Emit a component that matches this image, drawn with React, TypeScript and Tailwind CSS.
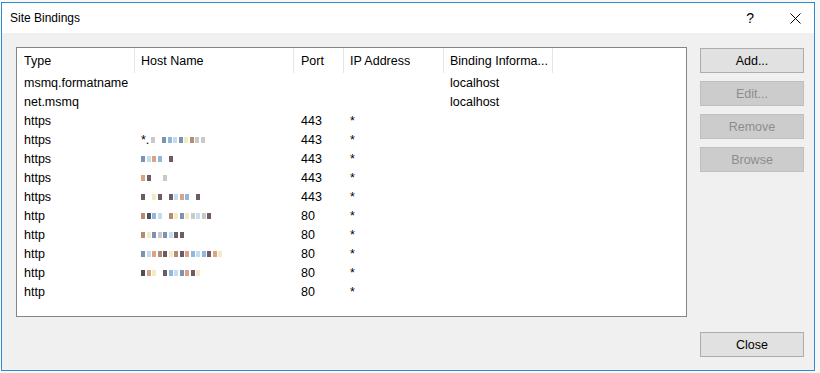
import React from "react";

type Binding = {
  type: string;
  host?: string[]; // pixelated host name cells
  hostPrefix?: string;
  port?: string;
  ip?: string;
  info?: string;
};

const G = "#c9c9c9";
const BG = "#7f90b3";
const BL = "#8fb8e0";
const LB = "#c4dcf0";
const LY = "#f1ecc6";
const BR = "#b58c72";
const MV = "#6f5b66";
const OR = "#dba383";
const DK = "#4f4f5a";
const W = "";

const bindings: Binding[] = [
  { type: "msmq.formatname", info: "localhost" },
  { type: "net.msmq", info: "localhost" },
  { type: "https", port: "443", ip: "*" },
  { type: "https", hostPrefix: "*.", host: [G, W, BG, BL, LB, BG, LY, BR, G, G], port: "443", ip: "*" },
  { type: "https", host: [BG, LB, OR, BL, W, MV], port: "443", ip: "*" },
  { type: "https", host: [OR, MV, W, W, G], port: "443", ip: "*" },
  { type: "https", host: [MV, W, LY, MV, W, MV, LB, OR, BL, W, MV], port: "443", ip: "*" },
  { type: "http", host: [BR, DK, BL, LB, W, BR, LY, BG, LY, G, LB, G, MV], port: "80", ip: "*" },
  { type: "http", host: [BR, LY, BG, G, BG, LB, MV, MV], port: "80", ip: "*" },
  { type: "http", host: [BG, LB, OR, BR, MV, LY, BR, MV, OR, BL, LB, BL, MV, OR, LY], port: "80", ip: "*" },
  { type: "http", host: [DK, OR, LY, W, MV, BL, LB, BG, OR, MV, LY], port: "80", ip: "*" },
  { type: "http", port: "80", ip: "*" },
];

const cols = [
  { label: "Type", w: "w-[118px] pl-[7px]" },
  { label: "Host Name", w: "w-[159px] pl-[6px]" },
  { label: "Port", w: "w-[50px] pl-[7px]" },
  { label: "IP Address", w: "w-[100px] pl-[6px]" },
  { label: "Binding Informa...", w: "w-[109px] pl-[6px]" },
];

const Pixels = ({ cells }: { cells: string[] }) => (
  <div className="flex items-center h-[6px] blur-[0.4px]">
    {cells.map((c, i) => (
      <span key={i} className="w-[4px] h-[6px] mr-[1.5px]" style={{ backgroundColor: c || "transparent" }} />
    ))}
  </div>
);

const Btn = ({ label, disabled }: { label: string; disabled?: boolean }) => (
  <button
    className={
      disabled
        ? "w-[104px] h-[25px] pt-[1px] border border-[#bfbfbf] bg-[#cccccc] text-[#8d8d8d] text-[12.5px]"
        : "w-[104px] h-[25px] pt-[1px] border border-[#adadad] bg-[#e1e1e1] text-black text-[12.5px]"
    }
  >
    {label}
  </button>
);

export default function App() {
  return (
    <div className="w-[820px] h-[373px] bg-[#f7f7f7] pt-[2px] pl-[1px] overflow-hidden" style={{ fontFamily: '"Liberation Sans", Arial, sans-serif' }}>
      <div className="w-[814px] h-[369px] border border-[#2a8dd0] flex flex-col">
        {/* title bar */}
        <div className="h-[30px] bg-white flex items-center pl-[8px] pr-[13px] text-[12px] text-black">
          <span className="flex-1">Site Bindings</span>
          <span className="text-[14px] mr-[36px]">?</span>
          <svg width="11" height="11" viewBox="0 0 11 11">
            <path d="M0.5 0.5 L10.5 10.5 M10.5 0.5 L0.5 10.5" stroke="#000" strokeWidth="1" />
          </svg>
        </div>

        {/* body */}
        <div className="flex-1 bg-[#f0f0f0] pl-[14px] pr-[10px] pt-[14px] flex flex-col">
          <div className="flex gap-[13px]">
            <div className="w-[671px] h-[270px] border border-[#858585] bg-white text-[12.5px] text-black">
              <div className="flex h-[25px]">
                {cols.map((c) => (
                  <div key={c.label} className={`${c.w} pt-[2px] border-r border-[#e5e5e5] flex items-center whitespace-nowrap`}>
                    {c.label}
                  </div>
                ))}
              </div>
              {bindings.map((b, i) => (
                <div key={i} className="flex h-[19px] pt-[1px] items-center">
                  <div className="w-[118px] pl-[7px]">{b.type}</div>
                  <div className="w-[159px] pl-[6px] flex items-center">
                    {b.hostPrefix && <span className="mr-[2px]">{b.hostPrefix}</span>}
                    {b.host && <Pixels cells={b.host} />}
                  </div>
                  <div className="w-[50px] pl-[7px]">{b.port}</div>
                  <div className="w-[100px] pl-[6px]">{b.ip}</div>
                  <div className="w-[109px] pl-[6px]">{b.info}</div>
                </div>
              ))}
            </div>
            <div className="flex flex-col gap-2 mt-[1px]">
              <Btn label="Add..." />
              <Btn label="Edit..." disabled />
              <Btn label="Remove" disabled />
              <Btn label="Browse" disabled />
            </div>
          </div>
          <div className="flex justify-end mt-[15px]">
            <Btn label="Close" />
          </div>
        </div>
      </div>
    </div>
  );
}
